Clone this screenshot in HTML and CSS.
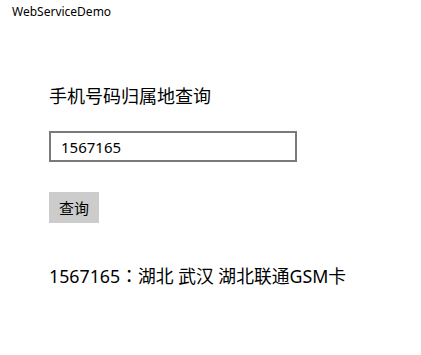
FILE: index.html
```html
<!DOCTYPE html>
<html lang="zh-CN">
<head>
<meta charset="utf-8">
<title>WebServiceDemo</title>
<link rel="stylesheet" href="styles.css">
</head>
<body>
<div class="app-title">WebServiceDemo</div>
<main class="content">
  <h1 class="heading">手机号码归属地查询</h1>
  <div class="field"><input class="phone-input" type="text" value="1567165"></div>
  <button class="query-btn" type="button">查询</button>
  <p class="result">1567165<span class="colon" lang="zh-TW">：</span>湖北 武汉 湖北联通GSM卡</p>
</main>
</body>
</html>
```

FILE: styles.css
```css
html, body {
  margin: 0;
  padding: 0;
  background: #ffffff;
  color: #000000;
  font-family: "Noto Sans", "Noto Sans CJK SC", sans-serif;
}

.app-title {
  font-size: 12px;
  line-height: 16px;
  padding: 4px 0 0 12px;
  height: 20px;
  box-sizing: border-box;
}

.content {
  display: flex;
  flex-direction: column;
  align-items: flex-start;
  padding-left: 49px;
}

.heading {
  font-size: 18px;
  font-weight: normal;
  line-height: 24px;
  margin: 64px 0 0 0;
}

.field {
  margin-top: 23px;
}

.phone-input {
  width: 248px;
  height: 31px;
  box-sizing: border-box;
  border: 2px solid #7a7a7a;
  padding: 0 10px;
  font-family: "Noto Sans", "Noto Sans CJK SC", sans-serif;
  font-size: 15px;
  color: #000;
  outline: none;
  margin: 0;
  background: #fff;
}

.query-btn {
  margin-top: 30px;
  width: 50px;
  height: 31px;
  border: none;
  background: #cccccc;
  font-family: "Noto Sans", "Noto Sans CJK SC", sans-serif;
  font-size: 15px;
  color: #000;
  padding: 0;
}

.result {
  font-size: 17.8px;
  line-height: 24px;
  margin: 40px 0 0 0;
}

.colon {
  font-family: "Noto Sans CJK TC", sans-serif;
}
```
